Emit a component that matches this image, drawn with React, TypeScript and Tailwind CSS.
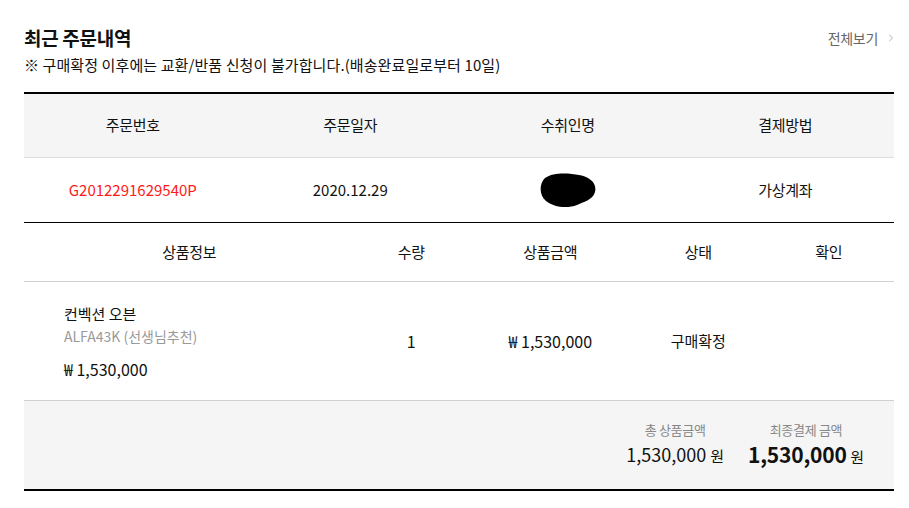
import { ChevronRight } from 'lucide-react';

const font = { fontFamily: '"Noto Sans CJK KR", "Noto Sans", sans-serif' };

export default function App() {
  return (
    <div className="min-h-screen bg-white text-[#111]" style={font}>
      <div className="px-[24px] pt-[24px] w-[918px]">
        {/* Title */}
        <div className="flex items-start justify-between">
          <div>
            <h2 className="text-[19px] font-bold leading-[28px] tracking-[-0.3px]">최근 주문내역</h2>
            <p className="text-[15px] leading-[24px] tracking-[0.1px] mt-[1px]">
              ※ 구매확정 이후에는 교환/반품 신청이 불가합니다.(배송완료일로부터 10일)
            </p>
          </div>
          <a className="flex items-center gap-[7px] text-[14px] text-[#666] leading-[28px] tracking-[-0.3px] -mr-[3px]">
            전체보기
            <ChevronRight className="w-[12px] h-[12px] text-[#999]" strokeWidth={1.5} />
          </a>
        </div>

        {/* Order info */}
        <div className="mt-[15px] border-t-2 border-black w-[870px]">
          <div className="grid grid-cols-4 h-[64px] bg-[#f5f5f5] border-b border-[#dcdcdc] text-[15px] tracking-[-0.3px]">
            <div className="flex items-center justify-center">주문번호</div>
            <div className="flex items-center justify-center">주문일자</div>
            <div className="flex items-center justify-center">수취인명</div>
            <div className="flex items-center justify-center">결제방법</div>
          </div>
          <div className="grid grid-cols-4 h-[65px] border-b border-black text-[15px]">
            <div className="flex items-center justify-center text-[#ff1a1a]">G2012291629540P</div>
            <div className="flex items-center justify-center">2020.12.29</div>
            <div className="flex items-center justify-center">
              <svg width="58" height="36" viewBox="0 0 58 36">
                <path d="M6 6 C14 0 30 1 40 3 C52 5 58 12 56 20 C54 28 44 30 38 33 C28 37 14 35 7 29 C0 23 0 12 6 6 Z" fill="#000" />
              </svg>
            </div>
            <div className="flex items-center justify-center tracking-[-0.3px]">가상계좌</div>
          </div>

          {/* Product table */}
          <div className="grid grid-cols-[38%_13%_19%_15%_15%] h-[59px] border-b border-[#d0d0d0] text-[15px] tracking-[-0.3px]">
            <div className="flex items-center justify-center">상품정보</div>
            <div className="flex items-center justify-center">수량</div>
            <div className="flex items-center justify-center">상품금액</div>
            <div className="flex items-center justify-center">상태</div>
            <div className="flex items-center justify-center">확인</div>
          </div>
          <div className="grid grid-cols-[38%_13%_19%_15%_15%] h-[119px] border-b border-[#d0d0d0] text-[15px]">
            <div className="flex flex-col justify-center pl-[40px] pt-[1px]">
              <div className="leading-[22px]">컨벡션 오븐</div>
              <div className="text-[14px] text-[#999] leading-[22px]">ALFA43K (선생님추천)</div>
              <div className="leading-[22px] mt-[11px] text-[16px]">₩&nbsp;1,530,000</div>
            </div>
            <div className="flex items-center justify-center text-[16px]">1</div>
            <div className="flex items-center justify-center text-[16px]">₩&nbsp;1,530,000</div>
            <div className="flex items-center justify-center">구매확정</div>
            <div className="flex items-center justify-center"></div>
          </div>

          {/* Summary */}
          <div className="h-[90px] bg-[#f5f5f5] border-b-2 border-black flex justify-end items-center gap-[24px] pr-[30px]">
            <div className="flex flex-col items-center">
              <div className="text-[13px] text-[#888] leading-[20px] tracking-[-0.3px]">총 상품금액</div>
              <div className="text-[18px] leading-[28px]">
                1,530,000 <span className="text-[15px]">원</span>
              </div>
            </div>
            <div className="flex flex-col items-center">
              <div className="text-[13px] text-[#888] leading-[20px] tracking-[-0.3px]">최종결제 금액</div>
              <div className="leading-[28px]">
                <span className="text-[21px] font-bold tracking-[-0.2px]">1,530,000</span> <span className="text-[15px]">원</span>
              </div>
            </div>
          </div>
        </div>
      </div>
    </div>
  );
}
